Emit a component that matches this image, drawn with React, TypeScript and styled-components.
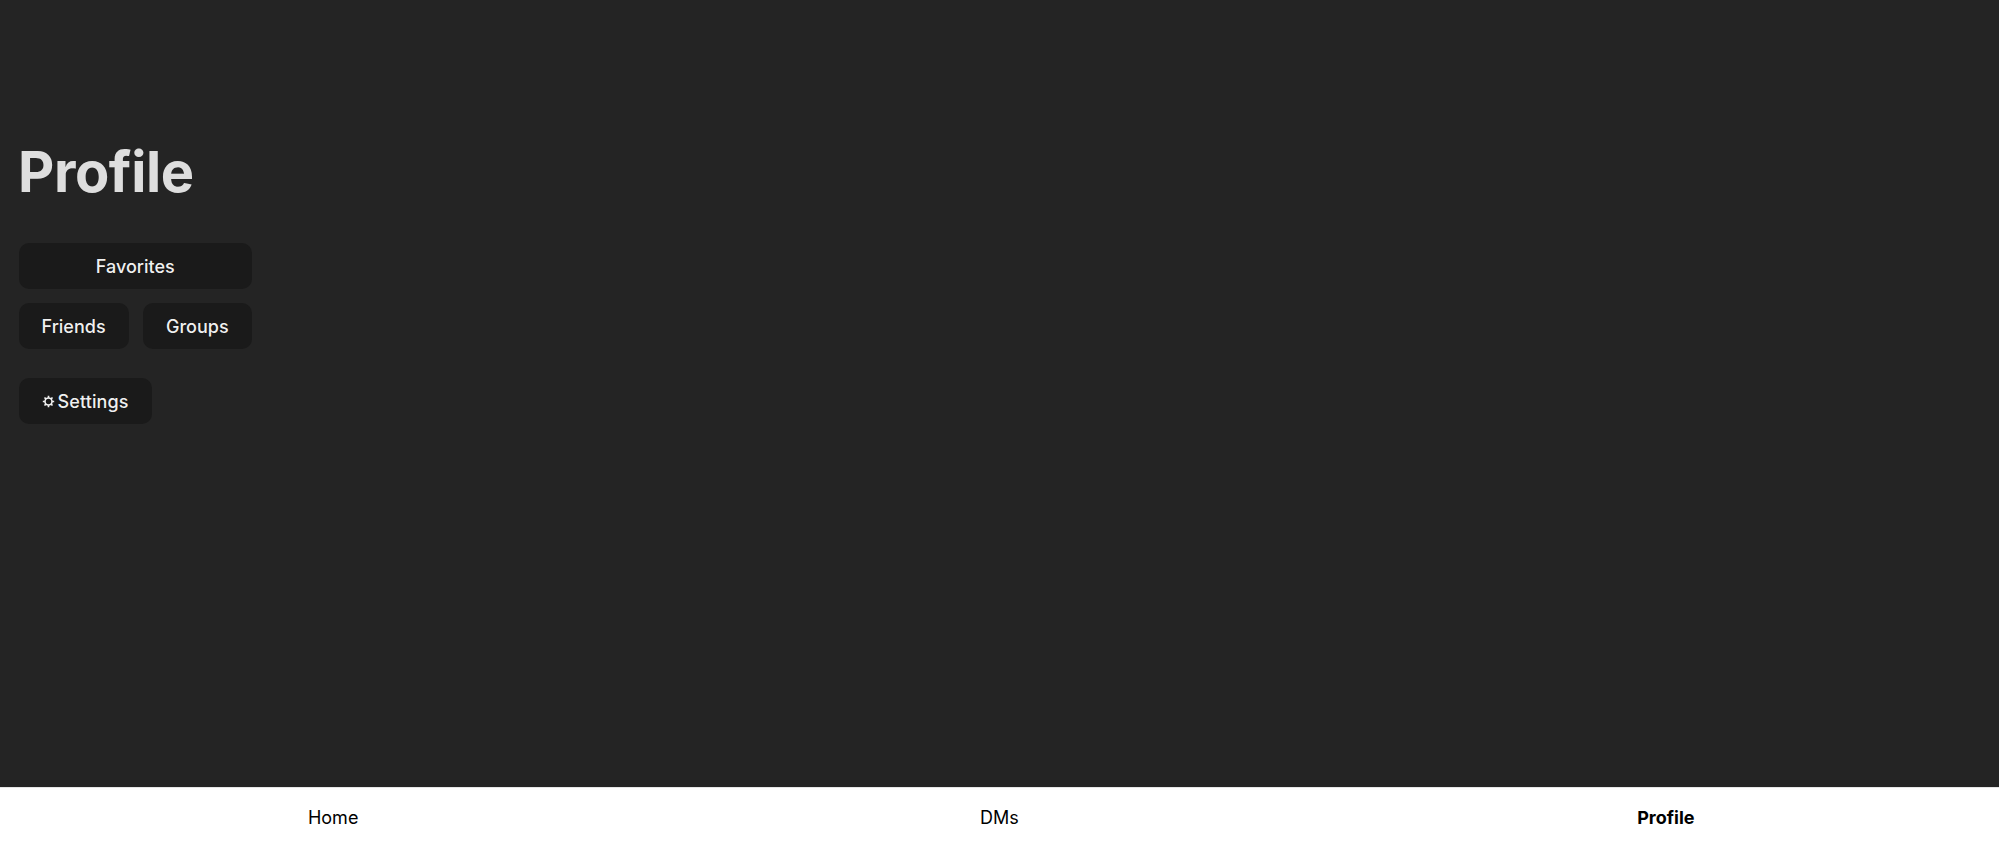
import styled, { createGlobalStyle } from "styled-components";

const Global = createGlobalStyle`
  html, body {
    margin: 0;
    height: 100%;
    background: #242424;
    font-family: Inter, "Liberation Sans", sans-serif;
  }
`;

const Page = styled.div`
  height: 853px;
  display: flex;
  flex-direction: column;
  overflow: hidden;
`;

const Main = styled.main`
  flex: 1;
  padding: 136px 0 0 18.5px;
  display: flex;
  flex-direction: column;
  align-items: flex-start;
`;

const Title = styled.h1`
  margin: 0 0 35px -0.5px;
  font-size: 56px;
  line-height: 72px;
  font-weight: 700;
  letter-spacing: -0.4px;
  color: rgba(255, 255, 255, 0.85);
`;

const Stack = styled.div`
  width: 233.5px;
  display: flex;
  flex-direction: column;
  gap: 14px;
`;

const Row = styled.div`
  display: flex;
  gap: 14px;
`;

const Button = styled.button<{ $grow?: boolean }>`
  flex: ${(props) => (props.$grow ? 1 : "none")};
  height: 46px;
  padding: 0 22px;
  border: 1px solid transparent;
  border-radius: 10px;
  background: #1a1a1a;
  color: rgba(255, 255, 255, 0.94);
  font-family: inherit;
  font-size: 18px;
  font-weight: 450;
  white-space: nowrap;
`;

const SettingsButton = styled(Button)`
  margin-top: 29px;
  padding: 0 22px;
  display: flex;
  align-items: center;
  gap: 3px;
  letter-spacing: 0.12px;
`;

const Nav = styled.nav`
  height: 66px;
  box-sizing: border-box;
  display: flex;
  background: #fff;
  border-top: 1px solid #e5e5e5;
`;

const NavItem = styled.a<{ $active?: boolean }>`
  flex: 1;
  padding-top: 19px;
  text-align: center;
  font-size: 18px;
  line-height: 22px;
  color: #000;
  font-weight: ${(props) => (props.$active ? 700 : 400)};
`;

function Gear() {
  return (
    <svg width="13" height="13" viewBox="0 0 24 24" fill="none" stroke="currentColor">
      <circle cx="12" cy="12" r="6.5" strokeWidth="3" />
      <path
        strokeWidth="3"
        d="M12 1.5v3.5M12 19v3.5M1.5 12h3.5M19 12h3.5M4.6 4.6l2.5 2.5M16.9 16.9l2.5 2.5M4.6 19.4l2.5-2.5M16.9 7.1l2.5-2.5"
      />
    </svg>
  );
}

export default function App() {
  return (
    <Page>
      <Global />
      <Main>
        <Title>Profile</Title>
        <Stack>
          <Button>Favorites</Button>
          <Row>
            <Button $grow>Friends</Button>
            <Button $grow>Groups</Button>
          </Row>
        </Stack>
        <SettingsButton>
          <Gear />
          Settings
        </SettingsButton>
      </Main>
      <Nav>
        <NavItem>Home</NavItem>
        <NavItem>DMs</NavItem>
        <NavItem $active>Profile</NavItem>
      </Nav>
    </Page>
  );
}
